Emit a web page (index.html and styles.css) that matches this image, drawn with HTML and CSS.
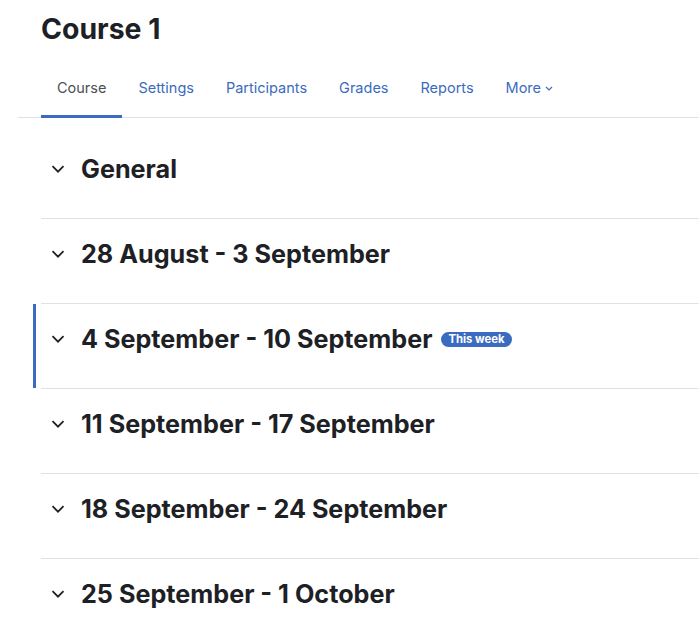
FILE: index.html
```html
<!DOCTYPE html>
<html>

<head>
  <meta charset="UTF-8">
  <meta name="viewport" content="width=device-width, initial-scale=1">
  <title>Course 1</title>
  <link rel="stylesheet" href="styles.css">
</head>

<body>
  <div class="page">
    <h1 class="page-title">Course 1</h1>
    <nav class="secondary-nav">
      <a class="nav-link active" href="#">Course</a>
      <a class="nav-link" href="#">Settings</a>
      <a class="nav-link" href="#">Participants</a>
      <a class="nav-link" href="#">Grades</a>
      <a class="nav-link" href="#">Reports</a>
      <a class="nav-link" href="#">More
        <svg class="caret" width="8" height="5" viewBox="0 0 8 5"><path d="M1 1l3 3 3-3" fill="none" stroke="currentColor" stroke-width="1.2"/></svg>
      </a>
    </nav>
    <ul class="sections">
      <li class="section">
        <div class="section-head">
          <svg class="chevron" width="14" height="8" viewBox="0 0 14 8"><path d="M1.5 1.2l5.5 5.5 5.5-5.5" fill="none" stroke="currentColor" stroke-width="1.8"/></svg>
          <h3 class="section-title">General</h3>
        </div>
      </li>
      <li class="section">
        <div class="section-head">
          <svg class="chevron" width="14" height="8" viewBox="0 0 14 8"><path d="M1.5 1.2l5.5 5.5 5.5-5.5" fill="none" stroke="currentColor" stroke-width="1.8"/></svg>
          <h3 class="section-title">28 August - 3 September</h3>
        </div>
      </li>
      <li class="section current">
        <div class="section-head">
          <svg class="chevron" width="14" height="8" viewBox="0 0 14 8"><path d="M1.5 1.2l5.5 5.5 5.5-5.5" fill="none" stroke="currentColor" stroke-width="1.8"/></svg>
          <h3 class="section-title">4 September - 10 September</h3>
          <span class="badge">This week</span>
        </div>
      </li>
      <li class="section">
        <div class="section-head">
          <svg class="chevron" width="14" height="8" viewBox="0 0 14 8"><path d="M1.5 1.2l5.5 5.5 5.5-5.5" fill="none" stroke="currentColor" stroke-width="1.8"/></svg>
          <h3 class="section-title">11 September - 17 September</h3>
        </div>
      </li>
      <li class="section">
        <div class="section-head">
          <svg class="chevron" width="14" height="8" viewBox="0 0 14 8"><path d="M1.5 1.2l5.5 5.5 5.5-5.5" fill="none" stroke="currentColor" stroke-width="1.8"/></svg>
          <h3 class="section-title">18 September - 24 September</h3>
        </div>
      </li>
      <li class="section">
        <div class="section-head">
          <svg class="chevron" width="14" height="8" viewBox="0 0 14 8"><path d="M1.5 1.2l5.5 5.5 5.5-5.5" fill="none" stroke="currentColor" stroke-width="1.8"/></svg>
          <h3 class="section-title">25 September - 1 October</h3>
        </div>
      </li>
    </ul>
  </div>
</body>

</html>
```

FILE: styles.css
```css
*{
  padding: 0;
  margin: 0;
  box-sizing: border-box;
}

body{
  font-family: Inter, "Liberation Sans", sans-serif;
  color: #1d2125;
  background: #fff;
  overflow: hidden;
}

.page{
  padding: 12px 0 0 41px;
}

.page-title{
  font-size: 28.4px;
  font-weight: 700;
  line-height: 34px;
}

.secondary-nav{
  display: flex;
  margin: 22px 0 0 -23px;
  padding-left: 23px;
  border-bottom: 1px solid #dee2e6;
}

.nav-link{
  display: flex;
  align-items: flex-start;
  gap: 4px;
  padding: 10px 16px 0;
  height: 50px;
  line-height: 20px;
  font-size: 14.5px;
  color: #3b6bc0;
  text-decoration: none;
  border-bottom: 3px solid transparent;
  margin-bottom: -1px;
}

.nav-link.active{
  color: #4a4f55;
  border-bottom-color: #3b6bc0;
}

.caret{
  margin-top: 8px;
}

.sections{
  list-style: none;
  margin-top: 16px;
}

.section{
  position: relative;
  height: 85px;
  border-top: 1px solid #dee2e6;
}

.section:first-child{
  border-top: none;
  height: 84px;
}

.section.current::before{
  content: "";
  position: absolute;
  left: -8px;
  top: 0;
  width: 3px;
  height: 84px;
  background: #3b6bc0;
}

.section-head{
  display: flex;
  align-items: center;
  height: 70px;
  padding-left: 10px;
}

.section:first-child .section-head{
  height: 69px;
}

.chevron{
  color: #1d2125;
  margin-right: 16px;
}

.section-title{
  font-size: 25.2px;
  font-weight: 700;
}

.badge{
  margin-left: 9px;
  padding: 0 7px;
  height: 15px;
  line-height: 15px;
  font-size: 11.3px;
  font-weight: 700;
  color: #fff;
  background: #3b6bc0;
  border-radius: 8px;
}
```
